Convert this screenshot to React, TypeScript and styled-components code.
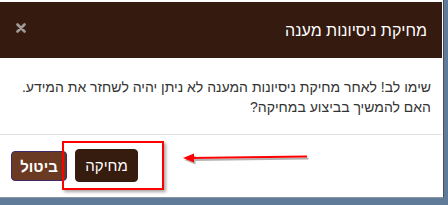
import styled, { createGlobalStyle } from "styled-components";

const Global = createGlobalStyle`
  html, body {
    margin: 0;
    padding: 0;
    background: #5f7b99;
  }
  body {
    font-family: "Liberation Sans", Arial, sans-serif;
  }
`;

const Page = styled.div`
  position: relative;
  width: 448px;
  height: 205px;
  background: #5f7b99;
  overflow: hidden;
`;

const Dialog = styled.div`
  width: 444px;
  height: 198px;
  box-sizing: border-box;
  padding: 2px 1px 0 0;
  background: #ffffff;
  border-right: 1px solid #4a4f55;
  border-bottom: 1px solid #8c96a0;
  display: flex;
  flex-direction: column;
  direction: rtl;
`;

const Header = styled.div`
  height: 56px;
  background: #351a0f;
  display: flex;
  align-items: center;
  justify-content: space-between;
  padding: 0 15px 0 16px;
`;

const Title = styled.h4`
  margin: 2px 0 0;
  font-size: 16px;
  font-weight: normal;
  color: #ffffff;
`;

const Close = styled.svg`
  align-self: flex-start;
  margin-top: 21px;
  display: block;
`;

const Body = styled.div`
  padding: 19px 11px 17px 15px;
  font-size: 14px;
  line-height: 20px;
  color: #333333;
  border-bottom: 1px solid #e3e3e3;
`;

const Footer = styled.div`
  flex: 1;
  display: flex;
  align-items: center;
  justify-content: flex-end;
  gap: 8px;
  padding: 0 11px;
`;

const Button = styled.button<{ $variant: "primary" | "cancel" }>`
  font-family: inherit;
  font-size: 15px;
  color: #ffffff;
  border-radius: 4px;
  cursor: pointer;
  box-sizing: border-box;
  ${(p) =>
    p.$variant === "primary"
      ? `
    background: #361b0f;
    border: 1px solid #361b0f;
    width: 63px;
    height: 33px;
    margin-top: -1px;
  `
      : `
    background: #6a3a23;
    border: 1px solid #3e2a6b;
    font-weight: bold;
    width: 56px;
    height: 30px;
  `}
`;

const Highlight = styled.div`
  position: absolute;
  left: 62px;
  top: 141px;
  width: 102px;
  height: 49px;
  box-sizing: border-box;
  border: 2px solid #ff0000;
  box-shadow: 2px 2px 3px rgba(0, 0, 0, 0.35);
  pointer-events: none;
`;

const Arrow = styled.svg`
  position: absolute;
  left: 180px;
  top: 150px;
  overflow: visible;
`;

export default function App() {
  return (
    <>
      <Global />
      <Page>
        <Dialog>
          <Header>
            <Title>מחיקת ניסיונות מענה</Title>
            <Close width="10" height="10" viewBox="0 0 10 10">
              <path
                d="M1.5 1.5 L8.5 8.5 M8.5 1.5 L1.5 8.5"
                stroke="#a19c99"
                strokeWidth="2.6"
                strokeLinecap="round"
              />
            </Close>
          </Header>
          <Body>
            שימו לב! לאחר מחיקת ניסיונות המענה לא ניתן יהיה לשחזר את המידע.
            האם להמשיך בביצוע במחיקה?
          </Body>
          <Footer>
            <Button $variant="primary">מחיקה</Button>
            <Button $variant="cancel">ביטול</Button>
          </Footer>
        </Dialog>
        <Highlight />
        <Arrow width="130" height="20" viewBox="0 0 130 20">
          <g opacity="0.3" transform="translate(1.5,2)">
            <line x1="10" y1="8" x2="127" y2="6.5" stroke="#000" strokeWidth="2" />
            <polygon points="3,8 14,3.5 14,12.5" fill="#000" />
          </g>
          <line x1="10" y1="8" x2="127" y2="6.5" stroke="#ff0000" strokeWidth="2" />
          <polygon points="3,8 14,3.5 14,12.5" fill="#ff0000" />
        </Arrow>
      </Page>
    </>
  );
}
